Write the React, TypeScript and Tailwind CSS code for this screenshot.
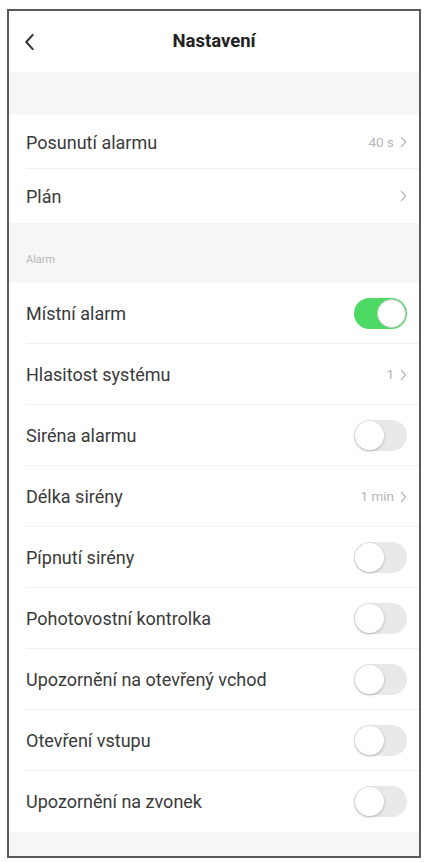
import React from 'react';

type Row =
  | { label: string; kind: 'value'; value?: string; divider?: boolean }
  | { label: string; kind: 'toggle'; on?: boolean; divider?: boolean };

const topRows: Row[] = [
  { label: 'Posunutí alarmu', kind: 'value', value: '40 s', divider: true },
  { label: 'Plán', kind: 'value' },
];

const alarmRows: Row[] = [
  { label: 'Místní alarm', kind: 'toggle', on: true, divider: true },
  { label: 'Hlasitost systému', kind: 'value', value: '1', divider: true },
  { label: 'Siréna alarmu', kind: 'toggle', divider: true },
  { label: 'Délka sirény', kind: 'value', value: '1 min', divider: true },
  { label: 'Pípnutí sirény', kind: 'toggle', divider: true },
  { label: 'Pohotovostní kontrolka', kind: 'toggle', divider: true },
  { label: 'Upozornění na otevřený vchod', kind: 'toggle', divider: true },
  { label: 'Otevření vstupu', kind: 'toggle', divider: true },
  { label: 'Upozornění na zvonek', kind: 'toggle' },
];

const Chevron: React.FC<{ className?: string; left?: boolean; width?: number }> = ({ className, left, width = 1.4 }) => (
  <svg viewBox="0 0 8 14" className={className} fill="none" stroke="currentColor" strokeWidth={width} strokeLinecap="round" strokeLinejoin="round">
    <path d={left ? 'M6.5 1.5 L1.5 7 L6.5 12.5' : 'M1.5 1.5 L6.5 7 L1.5 12.5'} />
  </svg>
);

const Toggle: React.FC<{ on?: boolean }> = ({ on }) =>
  on ? (
    <div className="w-[53px] h-[31px] rounded-full bg-[#4cd964] flex items-center justify-end pr-[1px]">
      <div className="w-[29px] h-[29px] rounded-full bg-white border border-[#c8c8c8]" />
    </div>
  ) : (
    <div className="w-[53px] h-[31px] rounded-full bg-[#e9e9e9] flex items-center pl-[1px]">
      <div className="w-[29px] h-[29px] rounded-full bg-white shadow-[0_1px_3px_rgba(0,0,0,0.25)]" />
    </div>
  );

const SettingRow: React.FC<{ row: Row; height: string }> = ({ row, height }) => (
  <div className={`relative flex items-center justify-between pl-[17px] pr-[12px] ${height}`}>
    <span className="text-[18px] text-[#3a3a3a]">{row.label}</span>
    {row.kind === 'toggle' ? (
      <Toggle on={row.on} />
    ) : (
      <div className="flex items-center gap-[6px] text-[#b5b5b5] text-[13.5px]">
        {row.value && <span>{row.value}</span>}
        <Chevron className="w-[7px] h-[12px]" />
      </div>
    )}
    {row.divider && <div className="absolute left-[17px] right-0 bottom-0 h-px bg-[#f0f0f0]" />}
  </div>
);

export default function App() {
  return (
    <div className="w-full h-[862px] bg-white pt-[9px] pl-[7px] pr-[7px]" style={{ fontFamily: 'Roboto, "Liberation Sans", sans-serif' }}>
      <div className="h-[849px] border-2 border-[#5a5a5a] bg-white flex flex-col overflow-hidden">
        <div className="relative h-[61px] shrink-0 flex items-center justify-center">
          <Chevron left width={1.6} className="absolute left-[15px] top-[22px] w-[11px] h-[18px] text-[#333]" />
          <span className="text-[18.5px] font-bold text-[#222]">Nastavení</span>
        </div>
        <div className="h-[43px] shrink-0 bg-[#f6f6f6]" />
        {topRows.map((r) => (
          <SettingRow key={r.label} row={r} height="h-[54px]" />
        ))}
        <div className="h-[60px] shrink-0 bg-[#f6f6f6] flex items-end pl-[17px] pb-[15px]">
          <span className="text-[11px] text-[#b8b8b8]">Alarm</span>
        </div>
        {alarmRows.map((r) => (
          <SettingRow key={r.label} row={r} height="h-[61px]" />
        ))}
        <div className="flex-1 bg-[#f6f6f6]" />
      </div>
    </div>
  );
}
